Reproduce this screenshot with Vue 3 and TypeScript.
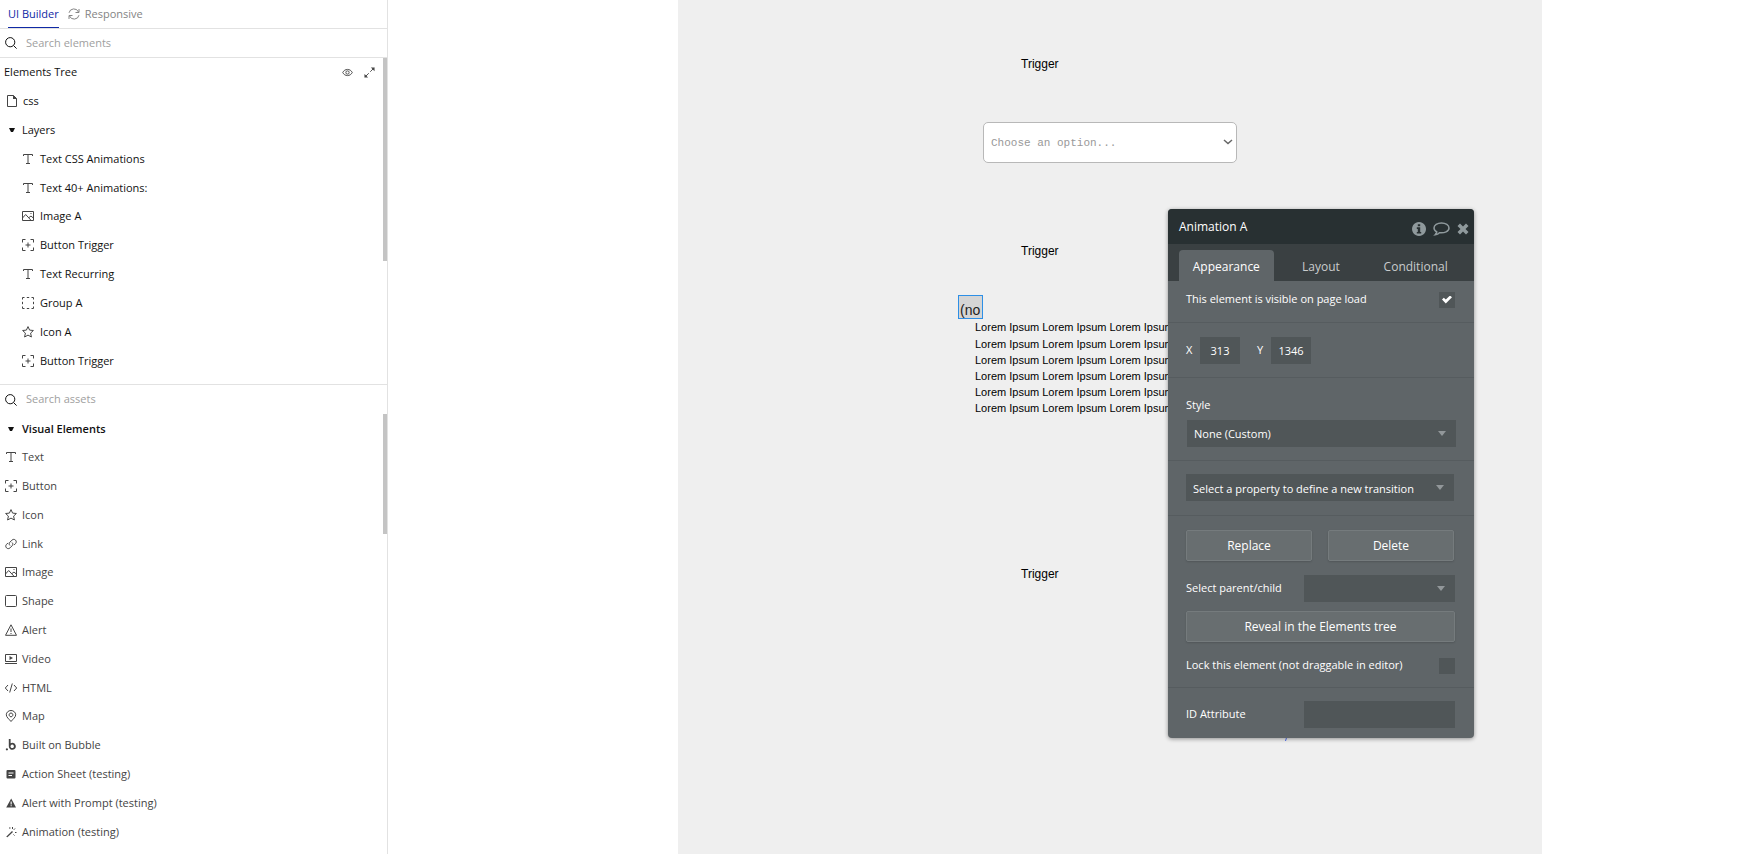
<script setup lang="ts">
import { ref } from 'vue'

interface Shape {
  d: string
  solid?: boolean
}
interface Row {
  icon: string
  label: string
}

const icons: Record<string, Shape[]> = {
  text: [{ d: 'M1.5 3V1.5h9V3M6 1.5v9M4 10.5h4' }],
  button: [{ d: 'M.5 3.5v-3h3M8.500 .5h3v3M11.500 8.500v3h-3M3.500 11.500h-3v-3M6 3.500v5M3.500 6h5' }],
  image: [{ d: 'M.5 1.500h11v9H.5zM.5 8l3.200-3.500 5.500 6M7 7.500l2-1.500 2.500 2.200M8.500 3.500h1' }],
  group: [{ d: 'M.5 2.500v-2h2M4.800 .5h2.400M9.500 .5h2v2M11.500 4.800v2.400M11.500 9.500v2h-2M7.200 11.500H4.800M2.500 11.500h-2v-2M.5 7.200V4.800' }],
  icon: [{ d: 'M6 .6l1.600 3.500 3.800 .4-2.800 2.600 .8 3.900L6 9.100 2.600 11l.8-3.900L.6 4.500l3.800-.4z' }],
  link: [{ d: 'M5 7.500C3.800 6.500 4 5.200 4.800 4.300l2.200-2.200c1-1 2.500-1 3.500 0s1 2.500 0 3.500L9 7.100M7 4.500c1.200 1 1 2.300.2 3.200L5 9.900c-1 1-2.500 1-3.500 0s-1-2.500 0-3.500L3 4.900' }],
  shape: [{ d: 'M.5 1.500q0-1 1-1h9q1 0 1 1v9q0 1-1 1h-9q-1 0-1-1z' }],
  alert: [{ d: 'M6 .8L11.500 11.300H.5zM6 4.500v3.500M6 9v1' }],
  video: [{ d: 'M.5 1.500h11v7H.5zM0 10.500h12' }, { d: 'M4.500 3l3.500 2-3.500 2z', solid: true }],
  html: [{ d: 'M3 3L.3 6 3 9M9 3l2.700 3L9 9M7.300 1.500l-2.600 9' }],
  map: [{ d: 'M6 11.500C4 9 1.300 7.200 1.300 4.800a4.700 4.300 0 0 1 9.400 0C10.700 7.200 8 9 6 11.500zM6 3a1.900 1.900 0 1 0 .01 0z' }],
  bubble: [{ d: 'M3.800 0h1.800v4.300a3.500 3.500 0 1 1-1.800 3zM7.200 5.600a1.700 1.700 0 1 0 .01 0zM1.900 9.200a1.100 1.100 0 1 0 .01 0z', solid: true }],
  sheet: [{ d: 'M2.500 2h7q1 0 1 1v6.500q0 1-1 1h-7q-1 0-1-1V3q0-1 1-1zM3.500 4.500v1h5v-1zM3.500 7v1h3.500V7z', solid: true }],
  warning: [{ d: 'M6.200 1.500L11 10.500H1.200zM5.600 4.500v3h1.100v-3zM5.600 8.300v1h1.100v-1z', solid: true }],
  wand: [
    { d: 'M1.200 10.800L7 5l1 1-5.600 5.200z', solid: true },
    { d: 'M4 2h1.500M7.500 1v2M10 2.500l-1.200 1.300M10 6.500h1.500M8.500 8.500l1 1' },
  ],
}

const tree: Row[] = [
  { icon: 'text', label: 'Text CSS Animations' },
  { icon: 'text', label: 'Text 40+ Animations:' },
  { icon: 'image', label: 'Image A' },
  { icon: 'button', label: 'Button Trigger' },
  { icon: 'text', label: 'Text Recurring' },
  { icon: 'group', label: 'Group A' },
  { icon: 'icon', label: 'Icon A' },
  { icon: 'button', label: 'Button Trigger' },
]

const assets: Row[] = [
  { icon: 'text', label: 'Text' },
  { icon: 'button', label: 'Button' },
  { icon: 'icon', label: 'Icon' },
  { icon: 'link', label: 'Link' },
  { icon: 'image', label: 'Image' },
  { icon: 'shape', label: 'Shape' },
  { icon: 'alert', label: 'Alert' },
  { icon: 'video', label: 'Video' },
  { icon: 'html', label: 'HTML' },
  { icon: 'map', label: 'Map' },
  { icon: 'bubble', label: 'Built on Bubble' },
  { icon: 'sheet', label: 'Action Sheet (testing)' },
  { icon: 'warning', label: 'Alert with Prompt (testing)' },
  { icon: 'wand', label: 'Animation (testing)' },
]

const tabs = ['Appearance', 'Layout', 'Conditional']
const activeTab = ref('Appearance')
const visibleOnLoad = ref(true)
const locked = ref(false)
const posX = ref('313')
const posY = ref('1346')
const idAttribute = ref('')
const elementQuery = ref('')
const assetQuery = ref('')
</script>

<template>
  <div class="editor">
    <aside class="sidebar">
      <nav class="modes">
        <button class="mode current" type="button">UI Builder</button>
        <button class="mode" type="button">
          <svg class="refresh" viewBox="0 0 12 12" aria-hidden="true">
            <path class="line" d="M1 4.800A5 5 0 0 1 10.500 4M11 1v3.500H7.500M11 7.200A5 5 0 0 1 1.500 8M1 11V7.500h3.500" />
          </svg>
          <span>Responsive</span>
        </button>
      </nav>
      <label class="search bordered">
        <svg class="magnifier" viewBox="0 0 12 12" aria-hidden="true">
          <circle class="line" cx="5.200" cy="5.200" r="4.600" />
          <path class="line" d="M8.600 8.600l3 3" />
        </svg>
        <input v-model="elementQuery" type="text" placeholder="Search elements" aria-label="Search elements" />
      </label>
      <div class="pane tree-pane">
        <ul class="list tree">
          <li class="row tree-head">
            <strong>Elements Tree</strong>
            <button class="tool" type="button" aria-label="Toggle visibility">
              <svg viewBox="0 0 12 12" aria-hidden="true">
                <path class="line" d="M.8 6C3 1.500 9 1.500 11.200 6 9 10.500 3 10.500 .8 6z" />
                <circle class="line" cx="6" cy="6" r="1.800" />
              </svg>
            </button>
            <button class="tool" type="button" aria-label="Expand">
              <svg viewBox="0 0 12 12" aria-hidden="true">
                <path class="line" d="M11 1L6.800 5.200M1 11l4.200-4.200" />
                <path d="M7.500 .5h4v4zM.5 7.500v4h4z" />
              </svg>
            </button>
          </li>
          <li class="row page-row">
            <svg class="glyph" viewBox="0 0 12 12" aria-hidden="true">
              <path class="line" d="M1.500 .5h6l3 3v8h-9z" />
              <path d="M7 0l4 4H7z" />
            </svg>
            <span>css</span>
          </li>
          <li class="row branch">
            <svg class="caret" viewBox="0 0 6 4" aria-hidden="true"><path d="M0 0h6L4 4H2z" /></svg>
            <strong>Layers</strong>
          </li>
          <li v-for="(item, i) in tree" :key="i" class="row leaf">
            <svg class="glyph" viewBox="0 0 12 12" aria-hidden="true">
              <path v-for="(s, n) in icons[item.icon]" :key="n" :class="{ line: !s.solid }" :d="s.d" fill-rule="evenodd" />
            </svg>
            <span>{{ item.label }}</span>
          </li>
        </ul>
        <div class="thumb tree-thumb"></div>
      </div>
      <label class="search">
        <svg class="magnifier" viewBox="0 0 12 12" aria-hidden="true">
          <circle class="line" cx="5.200" cy="5.200" r="4.600" />
          <path class="line" d="M8.600 8.600l3 3" />
        </svg>
        <input v-model="assetQuery" type="text" placeholder="Search assets" aria-label="Search assets" />
      </label>
      <div class="pane asset-pane">
        <ul class="list assets">
          <li class="row branch">
            <svg class="caret" viewBox="0 0 6 4" aria-hidden="true"><path d="M0 0h6L4 4H2z" /></svg>
            <strong>Visual Elements</strong>
          </li>
          <li v-for="item in assets" :key="item.label" class="row">
            <svg class="glyph" viewBox="0 0 12 12" aria-hidden="true">
              <path v-for="(s, n) in icons[item.icon]" :key="n" :class="{ line: !s.solid }" :d="s.d" fill-rule="evenodd" />
            </svg>
            <span>{{ item.label }}</span>
          </li>
        </ul>
        <div class="thumb asset-thumb"></div>
      </div>
    </aside>

    <main class="workspace">
      <div class="canvas">
        <button class="trigger first" type="button">Trigger</button>
        <div class="chooser">
          <select aria-label="Choose an option">
            <option>Choose an option...</option>
          </select>
          <svg class="chevron" viewBox="0 0 10 6" aria-hidden="true"><path d="M1 1l4 3.500L9 1" /></svg>
        </div>
        <button class="trigger second" type="button">Trigger</button>
        <div class="selected">(no</div>
        <div class="lorem">
          <p v-for="n in 6" :key="n">Lorem Ipsum Lorem Ipsum Lorem Ipsum</p>
        </div>
        <button class="trigger third" type="button">Trigger</button>
        <svg class="stroke" viewBox="0 0 4 6" aria-hidden="true"><path d="M3 0L1.500 5" /></svg>

        <section class="panel" aria-label="Animation A">
          <header class="title">
            <h2>Animation A</h2>
            <button type="button" aria-label="Info">
              <svg width="14" height="14" viewBox="0 0 14 14" aria-hidden="true">
                <path fill-rule="evenodd" d="M7 0a7 7 0 1 0 .01 0zM5.800 2.200h2.400v2H5.800zM4.800 5.300h3.400v4.600h1v1.600H4.800V9.900h1V6.900h-1z" />
              </svg>
            </button>
            <button type="button" aria-label="Comments">
              <svg width="17" height="14" viewBox="0 0 17 14" aria-hidden="true">
                <path class="line thick" d="M8.500 1C4.300 1 1 3.200 1 6c0 1.600 1.100 3 2.800 3.900-.1 1.300-.8 2-1.600 2.800 1.800-.2 3.200-.8 4.300-2 4.900.7 9.500-1.400 9.500-4.700 0-2.800-3.300-5-7.500-5z" />
              </svg>
            </button>
            <button type="button" aria-label="Close">
              <svg width="12" height="12" viewBox="0 0 12 12" aria-hidden="true">
                <path d="M3 .5L6 3.500l3-3L11.500 3l-3 3 3 3L9 11.500l-3-3-3 3L.5 9l3-3-3-3z" />
              </svg>
            </button>
          </header>
          <div class="tabs" role="tablist">
            <button
              v-for="tab in tabs"
              :key="tab"
              type="button"
              role="tab"
              :aria-selected="tab === activeTab"
              :class="{ active: tab === activeTab }"
              @click="activeTab = tab"
            >
              {{ tab }}
            </button>
          </div>

          <div class="block visible">
            <label for="visible">This element is visible on page load</label>
            <input id="visible" v-model="visibleOnLoad" type="checkbox" />
          </div>
          <div class="block position">
            <label for="pos-x">X</label>
            <input id="pos-x" v-model="posX" class="field" type="text" />
            <label for="pos-y">Y</label>
            <input id="pos-y" v-model="posY" class="field" type="text" />
          </div>
          <div class="block style">
            <label for="style">Style</label>
            <div class="dropdown">
              <select id="style"><option>None (Custom)</option></select>
              <svg class="arrow" viewBox="0 0 8 5" aria-hidden="true"><path d="M0 0h8L4 5z" /></svg>
            </div>
          </div>
          <div class="block transition">
            <div class="dropdown">
              <select aria-label="New transition"><option>Select a property to define a new transition</option></select>
              <svg class="arrow" viewBox="0 0 8 5" aria-hidden="true"><path d="M0 0h8L4 5z" /></svg>
            </div>
          </div>
          <div class="block actions">
            <div class="pair">
              <button class="action" type="button">Replace</button>
              <button class="action" type="button">Delete</button>
            </div>
            <div class="split">
              <label for="relative">Select parent/child</label>
              <div class="dropdown">
                <select id="relative"><option></option></select>
                <svg class="arrow" viewBox="0 0 8 5" aria-hidden="true"><path d="M0 0h8L4 5z" /></svg>
              </div>
            </div>
            <button class="action wide" type="button">Reveal in the Elements tree</button>
            <div class="lock">
              <label for="lock">Lock this element (not draggable in editor)</label>
              <input id="lock" v-model="locked" type="checkbox" />
            </div>
          </div>
          <div class="block identity">
            <div class="split">
              <label for="id-attribute">ID Attribute</label>
              <input id="id-attribute" v-model="idAttribute" class="field" type="text" />
            </div>
          </div>
        </section>
      </div>
    </main>
  </div>
</template>

<style>
html,
body {
  margin: 0;
  background: #fff;
}
</style>

<style scoped>
* {
  box-sizing: border-box;
}
button,
input,
select {
  margin: 0;
  padding: 0;
  border: 0;
  border-radius: 0;
  background: none;
  color: inherit;
  font: inherit;
  appearance: none;
  outline: none;
}
svg {
  display: block;
  flex: none;
  fill: currentColor;
}
.line {
  fill: none;
  stroke: currentColor;
  stroke-width: 1;
}
.thick {
  stroke-width: 1.500;
}
.editor {
  display: flex;
  height: 100vh;
  overflow: hidden;
  font: 11px/16px 'Open Sans', 'Noto Sans', sans-serif;
  color: #111;
}
strong {
  font-weight: 500;
}

/* Sidebar */
.sidebar {
  display: flex;
  flex: none;
  flex-direction: column;
  width: 388px;
  border-right: 1px solid #e2e2e2;
}
.modes {
  display: flex;
  gap: 9px;
  height: 29px;
  padding-left: 8px;
  border-bottom: 1px solid #e2e2e2;
}
.mode {
  display: flex;
  align-items: center;
  gap: 5px;
  height: 28px;
  border-bottom: 1px solid transparent;
  color: #848484;
}
.mode.current {
  border-color: #1029a5;
  color: #1029a5;
  font-weight: 500;
}
.refresh {
  width: 12px;
  height: 12px;
}
.search {
  display: flex;
  flex: none;
  align-items: center;
  gap: 9px;
  height: 29px;
  padding-left: 5px;
}
.search.bordered {
  border-bottom: 1px solid #e2e2e2;
}
.search input {
  flex: 1;
  height: 28px;
  padding-bottom: 2px;
}
.search input::placeholder {
  color: #a0a0a0;
  opacity: 1;
}
.magnifier {
  width: 12px;
  height: 12px;
}
.pane {
  display: flex;
  justify-content: space-between;
}
.tree-pane {
  flex: none;
  height: 327px;
  border-bottom: 1px solid #e2e2e2;
}
.asset-pane {
  flex: 1;
}
.list {
  display: grid;
  flex: 1;
  grid-auto-rows: 1fr;
  margin: 0;
  padding: 0 0 8px;
  list-style: none;
}
.tree {
  padding-bottom: 9px;
}
.assets {
  color: #444;
}
.row {
  display: flex;
  align-items: center;
  gap: 5px;
  padding-left: 5px;
  white-space: nowrap;
}
.glyph {
  width: 12px;
  height: 12px;
  color: #444;
}
.tree-head {
  gap: 11px;
  padding: 0 8px 0 4px;
}
.tree-head strong {
  flex: 1;
}
.tool svg {
  width: 11px;
  height: 11px;
  color: #444;
}
.page-row {
  padding-left: 6px;
}
.branch {
  gap: 7px;
  padding-left: 9px;
  color: #111;
}
.assets .branch {
  gap: 8px;
  padding-top: 2px;
  padding-left: 8px;
}
.assets strong {
  font-weight: 600;
}
.leaf {
  gap: 6px;
  padding-left: 22px;
}
.caret {
  width: 6px;
  height: 4px;
}
.thumb {
  width: 4px;
  background: #c4c4c4;
}
.tree-thumb {
  height: 203px;
}
.asset-thumb {
  height: 120px;
}

/* Canvas */
.workspace {
  display: flex;
  flex: 1;
  padding: 0 199px 0 290px;
}
.canvas {
  position: relative;
  flex: 1;
  background: #efefef;
  color: #000;
  font-family: 'Liberation Sans', Arial, sans-serif;
}
.trigger {
  position: absolute;
  left: 343px;
  font-size: 12px;
  line-height: 16px;
}
.first {
  top: 56px;
}
.second {
  top: 243px;
}
.third {
  top: 566px;
}
.chooser {
  position: absolute;
  top: 122px;
  left: 305px;
  width: 254px;
}
.chooser select {
  display: block;
  width: 100%;
  height: 41px;
  padding-left: 7px;
  border: 1px solid #b8b8b8;
  border-radius: 5px;
  background: #fff;
  color: #999;
  font: 11px/16px 'Liberation Mono', monospace;
}
.chevron {
  position: absolute;
  top: 17px;
  right: 4px;
  width: 10px;
  height: 6px;
  fill: none;
  stroke: #666;
  stroke-width: 1.500;
}
.selected {
  position: absolute;
  top: 295px;
  left: 280px;
  width: 25px;
  height: 24px;
  padding: 6px 0 0 1px;
  border: 1px solid #2d8fe6;
  background: #d5d5d5;
  color: #222;
  font-size: 14px;
  line-height: 17px;
}
.lorem {
  position: absolute;
  top: 319px;
  left: 297px;
  font-size: 11px;
  line-height: 16px;
  white-space: nowrap;
}
.lorem p {
  margin: 0;
}
.lorem p:first-child {
  margin-bottom: 1px;
}
.stroke {
  position: absolute;
  top: 736px;
  left: 606px;
  width: 4px;
  height: 6px;
  fill: none;
  stroke: #4a6cf0;
}

/* Property panel */
.panel {
  position: absolute;
  top: 209px;
  left: 490px;
  width: 306px;
  overflow: hidden;
  border-radius: 4px;
  background: #5f6568;
  box-shadow: 0 1px 4px rgba(0, 0, 0, 0.4);
  color: #fff;
  font: 11px/16px 'Open Sans', 'Noto Sans', sans-serif;
  font-weight: 500;
}
.title {
  display: flex;
  align-items: center;
  gap: 7px;
  height: 35px;
  padding: 4px 5px 0 11px;
  background: #283032;
  color: #8f999c;
}
.title h2 {
  flex: 1;
  margin: 0;
  padding-bottom: 4px;
  color: #fff;
  font-size: 12px;
  font-weight: 500;
}
.tabs {
  display: grid;
  grid-template-columns: repeat(3, 1fr);
  height: 37px;
  padding: 6px 11px 0;
  background: #3a4042;
  color: #c9cccd;
  font-size: 12px;
}
.tabs button {
  padding-top: 2px;
  border-radius: 4px 4px 0 0;
}
.tabs .active {
  background: #5f6568;
  color: #fff;
}
.block {
  padding: 0 19px 0 18px;
  border-bottom: 1px solid #565c5f;
}
.block:last-child {
  border-bottom: 0;
}
.field,
.dropdown select {
  display: block;
  width: 100%;
  height: 27px;
  background: #505658;
}
.visible,
.lock {
  display: flex;
  align-items: center;
  justify-content: space-between;
}
.visible {
  height: 42px;
  padding-bottom: 4px;
}
.visible label,
.lock label,
.split label {
  padding-bottom: 2px;
}
input[type='checkbox'] {
  display: grid;
  place-items: center;
  width: 16px;
  height: 16px;
  background: #505658;
}
input[type='checkbox']:checked::after {
  content: '';
  width: 10px;
  height: 8px;
  background: #fff;
  clip-path: polygon(0 50%, 18% 28%, 38% 50%, 80% 0, 100% 22%, 38% 100%);
}
.position {
  display: flex;
  align-items: center;
  height: 55px;
}
.position label {
  width: 14px;
}
.position .field {
  width: 40px;
  margin-right: 17px;
  text-align: center;
}
.style {
  padding-top: 19px;
  padding-right: 18px;
  padding-bottom: 13px;
}
.style label {
  display: block;
  margin-bottom: 7px;
}
.style .dropdown {
  margin-left: 1px;
}
.dropdown {
  position: relative;
}
.dropdown select {
  padding-left: 7px;
}
.arrow {
  position: absolute;
  top: 11px;
  right: 10px;
  width: 8px;
  height: 5px;
  color: #92979a;
}
.transition {
  padding-top: 13px;
  padding-right: 20px;
  padding-bottom: 14px;
}
.transition select {
  padding-top: 2px;
}
.actions {
  padding-top: 14px;
  padding-bottom: 13px;
}
.pair {
  display: grid;
  grid-template-columns: 1fr 1fr;
  gap: 16px;
  padding-right: 1px;
}
.action {
  height: 31px;
  border: 1px solid #757b7d;
  border-radius: 2px;
  background: #686e70;
  box-shadow: 0 1px 2px rgba(0, 0, 0, 0.150);
  font-size: 12px;
}
.wide {
  display: block;
  width: 100%;
}
.split {
  display: grid;
  grid-template-columns: 118px 1fr;
  align-items: center;
}
.actions .split {
  margin: 14px 0 9px;
}
.lock {
  height: 16px;
  margin-top: 16px;
}
.identity {
  padding-top: 13px;
  padding-bottom: 10px;
}
</style>
